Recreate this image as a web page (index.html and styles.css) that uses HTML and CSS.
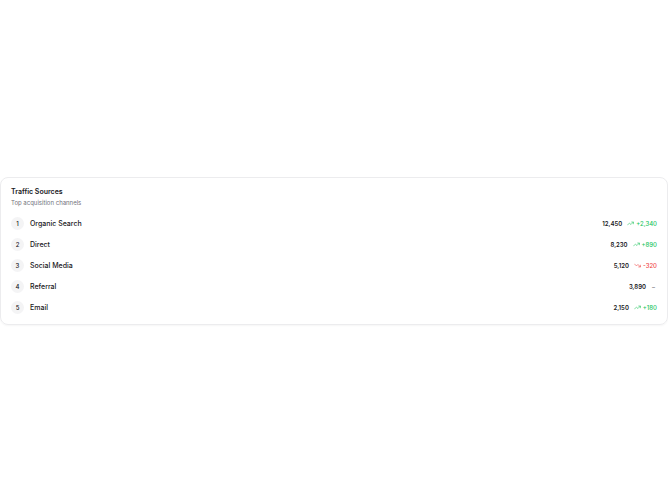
FILE: index.html
```html
<!DOCTYPE html>
<html>
<head>
  <title>Traffic Sources</title>
  <link rel="stylesheet" href="styles.css">
</head>
<body>
<div class="card">
    <div class="card-header">
        <div class="card-title">Traffic Sources</div>
        <div class="card-subtitle">Top acquisition channels</div>
    </div>
    <div class="source-list">
        <div class="source-row">
            <span class="rank">1</span>
            <span class="source-name">Organic Search</span>
            <span class="source-value">12,450</span>
            <span class="trend up">
                <svg viewBox="0 0 24 24"><polyline points="22 7 13.5 15.5 8.5 10.5 2 17"/><polyline points="16 7 22 7 22 13"/></svg>
                +2,340
            </span>
        </div>
        <div class="source-row">
            <span class="rank">2</span>
            <span class="source-name">Direct</span>
            <span class="source-value">8,230</span>
            <span class="trend up">
                <svg viewBox="0 0 24 24"><polyline points="22 7 13.5 15.5 8.5 10.5 2 17"/><polyline points="16 7 22 7 22 13"/></svg>
                +890
            </span>
        </div>
        <div class="source-row">
            <span class="rank">3</span>
            <span class="source-name">Social Media</span>
            <span class="source-value">5,120</span>
            <span class="trend down">
                <svg viewBox="0 0 24 24"><polyline points="22 17 13.5 8.5 8.5 13.5 2 7"/><polyline points="16 17 22 17 22 11"/></svg>
                -320
            </span>
        </div>
        <div class="source-row">
            <span class="rank">4</span>
            <span class="source-name">Referral</span>
            <span class="source-value">3,890</span>
            <span class="trend flat">&ndash;</span>
        </div>
        <div class="source-row">
            <span class="rank">5</span>
            <span class="source-name">Email</span>
            <span class="source-value">2,150</span>
            <span class="trend up">
                <svg viewBox="0 0 24 24"><polyline points="22 7 13.5 15.5 8.5 10.5 2 17"/><polyline points="16 7 22 7 22 13"/></svg>
                +180
            </span>
        </div>
    </div>
</div>
</body>
</html>
```

FILE: styles.css
```css
html, body {
    margin: 0;
    height: 100%;
}
body {
    display: flex;
    align-items: center;
    background: #ffffff;
    font-family: Inter, "Noto Sans", sans-serif;
    color: #18181b;
}
.card {
    flex-grow: 1;
    border: 1px solid #ececee;
    border-radius: 8px;
    box-shadow: 0 1px 2px rgba(0, 0, 0, 0.04);
    padding: 7px 10px 6px 10px;
}
.card-title {
    font-size: 7px;
    font-weight: 600;
    line-height: 13px;
}
.card-subtitle {
    font-size: 6px;
    color: #71717a;
    line-height: 9px;
}
.source-list {
    margin-top: 6px;
}
.source-row {
    display: flex;
    align-items: center;
    height: 21px;
}
.rank {
    width: 13px;
    height: 13px;
    border-radius: 50%;
    background: #f4f4f5;
    font-size: 6px;
    font-weight: 500;
    display: flex;
    align-items: center;
    justify-content: center;
    margin-right: 6px;
}
.source-name {
    font-size: 7px;
    font-weight: 500;
    flex-grow: 1;
}
.source-value {
    font-size: 6px;
    font-weight: 600;
    margin-right: 5px;
}
.trend {
    display: flex;
    align-items: center;
    gap: 2px;
    font-size: 6px;
    font-weight: 500;
}
.trend svg {
    width: 7px;
    height: 7px;
    fill: none;
    stroke: currentColor;
    stroke-width: 2;
    stroke-linecap: round;
    stroke-linejoin: round;
}
.up {
    color: #22c55e;
}
.down {
    color: #ef4444;
}
.flat {
    color: #71717a;
    padding: 0 2px 0 1px;
}
```
